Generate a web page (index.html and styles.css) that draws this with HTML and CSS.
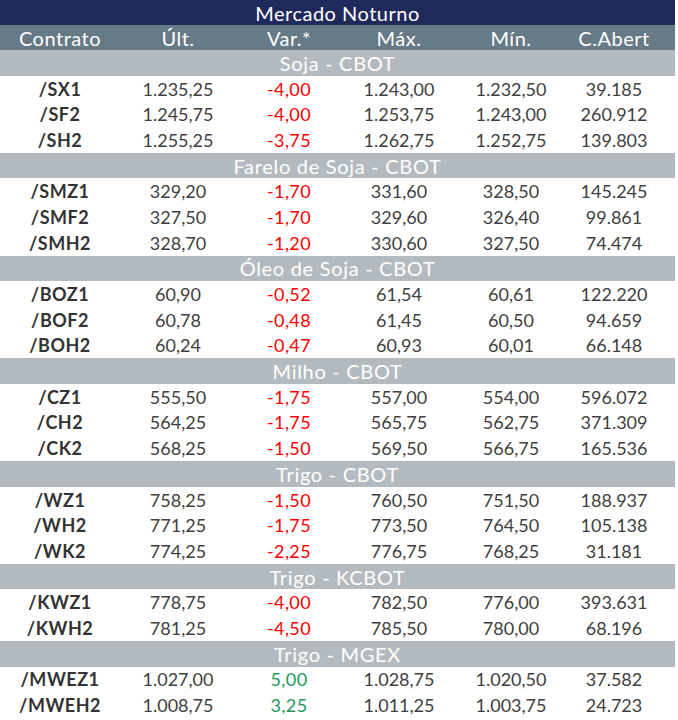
FILE: index.html
```html
<!DOCTYPE html>
<html lang="pt-BR">
<head>
<meta charset="utf-8">
<title>Mercado Noturno</title>
<link rel="stylesheet" href="styles.css">
</head>
<body>
<table class="quotes">
  <colgroup>
    <col class="c1"><col class="c2"><col class="c3"><col class="c4"><col class="c5"><col class="c6">
  </colgroup>
  <thead>
    <tr class="title"><th colspan="6">Mercado Noturno</th></tr>
    <tr class="head">
      <th>Contrato</th><th>Últ.</th><th>Var.*</th><th>Máx.</th><th>Mín.</th><th class="last">C.Abert</th>
    </tr>
  </thead>
  <tbody>
    <tr class="section"><td colspan="6">Soja - CBOT</td></tr>
    <tr><td class="sym">/SX1</td><td>1.235,25</td><td class="neg">-4,00</td><td>1.243,00</td><td>1.232,50</td><td class="last">39.185</td></tr>
    <tr><td class="sym">/SF2</td><td>1.245,75</td><td class="neg">-4,00</td><td>1.253,75</td><td>1.243,00</td><td class="last">260.912</td></tr>
    <tr><td class="sym">/SH2</td><td>1.255,25</td><td class="neg">-3,75</td><td>1.262,75</td><td>1.252,75</td><td class="last">139.803</td></tr>

    <tr class="section"><td colspan="6">Farelo de Soja - CBOT</td></tr>
    <tr><td class="sym">/SMZ1</td><td>329,20</td><td class="neg">-1,70</td><td>331,60</td><td>328,50</td><td class="last">145.245</td></tr>
    <tr><td class="sym">/SMF2</td><td>327,50</td><td class="neg">-1,70</td><td>329,60</td><td>326,40</td><td class="last">99.861</td></tr>
    <tr><td class="sym">/SMH2</td><td>328,70</td><td class="neg">-1,20</td><td>330,60</td><td>327,50</td><td class="last">74.474</td></tr>

    <tr class="section"><td colspan="6">Óleo de Soja - CBOT</td></tr>
    <tr><td class="sym">/BOZ1</td><td>60,90</td><td class="neg">-0,52</td><td>61,54</td><td>60,61</td><td class="last">122.220</td></tr>
    <tr><td class="sym">/BOF2</td><td>60,78</td><td class="neg">-0,48</td><td>61,45</td><td>60,50</td><td class="last">94.659</td></tr>
    <tr><td class="sym">/BOH2</td><td>60,24</td><td class="neg">-0,47</td><td>60,93</td><td>60,01</td><td class="last">66.148</td></tr>

    <tr class="section"><td colspan="6">Milho - CBOT</td></tr>
    <tr><td class="sym">/CZ1</td><td>555,50</td><td class="neg">-1,75</td><td>557,00</td><td>554,00</td><td class="last">596.072</td></tr>
    <tr><td class="sym">/CH2</td><td>564,25</td><td class="neg">-1,75</td><td>565,75</td><td>562,75</td><td class="last">371.309</td></tr>
    <tr><td class="sym">/CK2</td><td>568,25</td><td class="neg">-1,50</td><td>569,50</td><td>566,75</td><td class="last">165.536</td></tr>

    <tr class="section"><td colspan="6">Trigo - CBOT</td></tr>
    <tr><td class="sym">/WZ1</td><td>758,25</td><td class="neg">-1,50</td><td>760,50</td><td>751,50</td><td class="last">188.937</td></tr>
    <tr><td class="sym">/WH2</td><td>771,25</td><td class="neg">-1,75</td><td>773,50</td><td>764,50</td><td class="last">105.138</td></tr>
    <tr><td class="sym">/WK2</td><td>774,25</td><td class="neg">-2,25</td><td>776,75</td><td>768,25</td><td class="last">31.181</td></tr>

    <tr class="section"><td colspan="6">Trigo - KCBOT</td></tr>
    <tr><td class="sym">/KWZ1</td><td>778,75</td><td class="neg">-4,00</td><td>782,50</td><td>776,00</td><td class="last">393.631</td></tr>
    <tr><td class="sym">/KWH2</td><td>781,25</td><td class="neg">-4,50</td><td>785,50</td><td>780,00</td><td class="last">68.196</td></tr>

    <tr class="section"><td colspan="6">Trigo - MGEX</td></tr>
    <tr><td class="sym">/MWEZ1</td><td>1.027,00</td><td class="pos">5,00</td><td>1.028,75</td><td>1.020,50</td><td class="last">37.582</td></tr>
    <tr><td class="sym">/MWEH2</td><td>1.008,75</td><td class="pos">3,25</td><td>1.011,25</td><td>1.003,75</td><td class="last">24.723</td></tr>
  </tbody>
</table>
</body>
</html>
```

FILE: styles.css
```css
html, body {
  margin: 0;
  padding: 0;
  background: #ffffff;
}

.quotes {
  width: 675px;
  table-layout: fixed;
  border-collapse: collapse;
  border-spacing: 0;
  font-family: Lato, "Open Sans", sans-serif;
  font-size: 18px;
  color: #404040;
}

.c1 { width: 120px; }
.c2 { width: 116px; }
.c3 { width: 106px; }
.c4 { width: 114px; }
.c5 { width: 110px; }
.c6 { width: 109px; }

.quotes th,
.quotes td {
  height: 25.7px;
  padding: 0;
  text-align: center;
  vertical-align: middle;
  line-height: 20px;
  white-space: nowrap;
}

.quotes th.last,
.quotes td.last {
  padding-right: 13px;
}

.title th {
  background: #1f295b;
  color: #ffffff;
  font-weight: normal;
  font-size: 20px;
  letter-spacing: 0.5px;
  height: 25px;
}

.head th {
  background: #667a88;
  color: #ffffff;
  font-weight: normal;
  font-size: 20px;
  letter-spacing: 0.5px;
  height: 25px;
}

.section td {
  background: #b4bbc0;
  color: #ffffff;
  font-size: 20px;
  letter-spacing: 0.7px;
}

.sym {
  font-weight: bold;
  color: #333333;
  letter-spacing: 0.5px;
}

.neg {
  color: #ff0000;
  letter-spacing: 0.4px;
}

.pos {
  color: #22995a;
  letter-spacing: 0.4px;
}
```
